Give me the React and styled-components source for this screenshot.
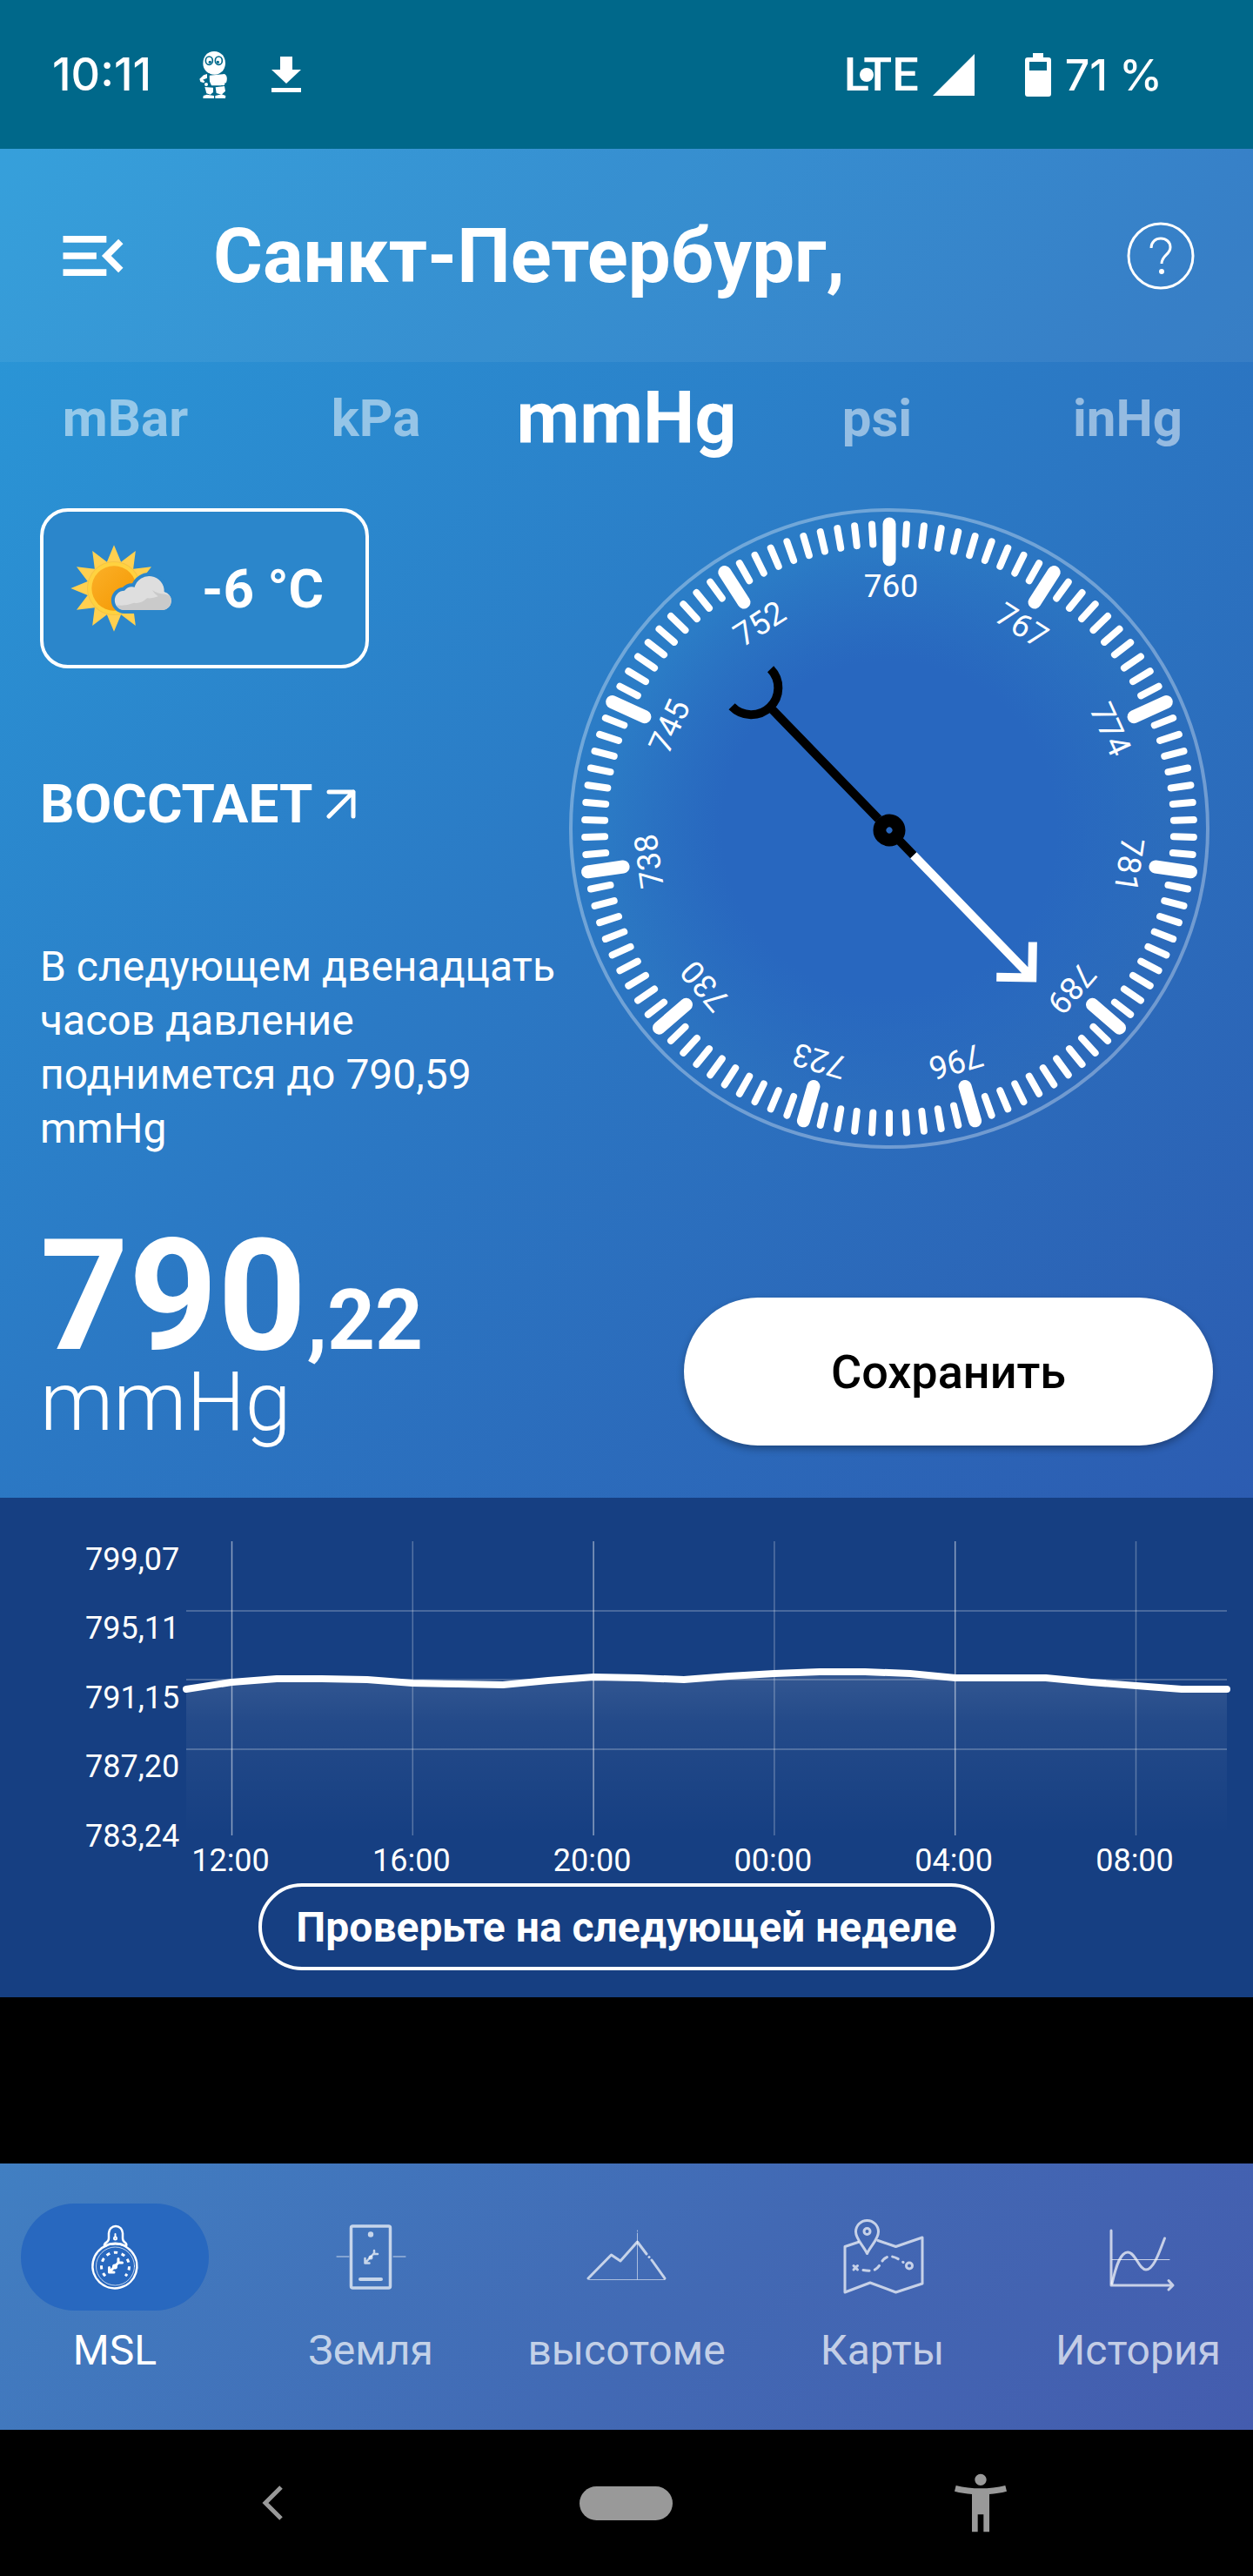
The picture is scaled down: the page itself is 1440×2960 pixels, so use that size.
import styled, {createGlobalStyle} from "styled-components";
import {useState} from "react";
import {MdMenuOpen, MdAccessibilityNew} from "react-icons/md";

const GlobalStyle = createGlobalStyle`
    * {
        box-sizing: border-box;
    }

    body {
        margin: 0;
        background: #000;
        color: #fff;
        font-family: Roboto, "Liberation Sans", sans-serif;
    }

    button {
        padding: 0;
        border: 0;
        background: none;
        color: inherit;
        font-family: inherit;
        cursor: pointer;
    }

    svg {
        display: block;
        flex-shrink: 0;
    }
`

const StatusBar = styled.div`
    display: flex;
    align-items: center;
    justify-content: space-between;
    height: 171px;
    padding: 0 104px 0 60px;
    background: #00688a;
    font-family: Inter, Roboto, sans-serif;
    font-size: 52px;
    font-weight: 500;
`

const StatusGroup = styled.div`
    display: flex;
    align-items: center;
`

const Notifications = styled.div`
    display: flex;
    align-items: center;
    gap: 26px;
    margin-left: 32px;
`

const Network = styled.span`
    position: relative;
    margin-right: 16px;
    font-family: Roboto, sans-serif;
    font-size: 54px;

    &::after {
        content: "";
        position: absolute;
        top: 50%;
        left: 18px;
        width: 16px;
        height: 16px;
        margin-top: -8px;
        border-radius: 50%;
        background: #fff;
    }
`

const Battery = styled.span`
    display: flex;
    align-items: center;
    gap: 16px;
    margin-left: 58px;
    font-size: 50px;
`

const Hero = styled.div`
    background: linear-gradient(135deg, #2a9ad9, #2b7ac5 48%, #2c5cb1);
`

const Header = styled.header`
    display: flex;
    align-items: center;
    height: 245px;
    padding: 0 66px 0 61px;
    background: rgba(255, 255, 255, 0.06);
`

const IconButton = styled.button`
    display: flex;
`

const City = styled.h1`
    flex: 1;
    margin: 0 0 0 92px;
    font-size: 87px;
    font-weight: 700;
    line-height: 100px;
`

const Units = styled.div`
    display: grid;
    grid-template-columns: repeat(5, 1fr);
    height: 128px;
`

const Unit = styled.button`
    color: ${({$active}) => $active ? "#fff" : "rgba(255, 255, 255, 0.5)"};
    font-size: ${({$active}) => $active ? "84px" : "60px"};
    font-weight: 700;
`

const Instruments = styled.section`
    display: grid;
    grid-template-columns: minmax(0, 1fr) 736px;
    padding: 40px 50px 89px 46px;
`

const Summary = styled.div`
    display: flex;
    flex-direction: column;
    align-items: flex-start;
    gap: 120px;
`

const Weather = styled.button`
    display: flex;
    align-items: center;
    gap: 28px;
    height: 184px;
    padding: 0 48px 0 24px;
    border: 4px solid #fff;
    border-radius: 32px;
    background: #2b86cb;
    font-size: 62px;
    font-weight: 700;
`

const Trend = styled.h2`
    display: flex;
    align-items: center;
    gap: 16px;
    margin: 0;
    font-size: 62px;
    font-weight: 700;
    line-height: 72px;
`

const Forecast = styled.p`
    max-width: 600px;
    margin: 0;
    font-size: 48px;
    line-height: 62px;
`

const ReadingRow = styled.section`
    display: flex;
    align-items: flex-end;
    justify-content: space-between;
    padding: 0 46px 60px;
`

const Reading = styled.div`
    display: flex;
    align-items: baseline;
    font-size: 96px;
    font-weight: 700;
    line-height: 80px;
`

const Whole = styled.span`
    font-size: 178px;
    line-height: 144px;
`

const ReadingUnit = styled.div`
    font-size: 95px;
    font-weight: 300;
    line-height: 100px;
`

const SaveButton = styled.button`
    width: 608px;
    height: 170px;
    border-radius: 85px;
    background: #fff;
    box-shadow: 0 4px 8px rgba(0, 0, 0, 0.3);
    color: #000;
    font-size: 54px;
    font-weight: 500;
`

const ChartPanel = styled.section`
    display: flex;
    flex-direction: column;
    align-items: center;
    padding: 40px 0 31px;
    background: #163f82;
`

const ChartSvg = styled.svg`
    width: 100%;
    height: auto;
`

const CheckButton = styled.button`
    height: 100px;
    padding: 0 39px;
    border: 4px solid #fff;
    border-radius: 50px;
    font-size: 48px;
    font-weight: 700;
`

const AdSpace = styled.div`
    height: 191px;
`

const TabBar = styled.nav`
    display: grid;
    grid-template-columns: repeat(5, minmax(0, 1fr));
    column-gap: 78px;
    height: 306px;
    padding: 46px 24px 0;
    background: linear-gradient(135deg, #417fc2, #4269b4 55%, #445cae);
`

const Tab = styled.a`
    display: flex;
    flex-direction: column;
    align-items: center;
    gap: 18px;
    color: ${({$active}) => $active ? "#fff" : "rgba(255, 255, 255, 0.7)"};
    font-size: 48px;
    line-height: 56px;
    text-decoration: none;
    white-space: nowrap;
`

const TabIcon = styled.span`
    display: flex;
    align-items: center;
    justify-content: center;
    width: 100%;
    height: 123px;
    border-radius: 62px;
    background: ${({$active}) => $active ? "#2868bf" : "transparent"};
`

const SystemBar = styled.div`
    display: grid;
    grid-template-columns: repeat(3, 1fr);
    align-items: center;
    justify-items: center;
    height: 168px;
    padding: 0 110px;
    color: #999;
`

const HomePill = styled.button`
    width: 107px;
    height: 39px;
    border-radius: 20px;
    background: #999;
`

const Mascot = () => (
    <svg width="80" height="80" viewBox="0 0 240 240" fill="#fff">
        <path d="M120 39c23 0 39 17 39 41 0 21-16 39-37 39-24 0-40-17-40-38 0-25 16-42 38-42z"/>
        <g fill="#fff" stroke="#00688a" strokeWidth="5">
            <ellipse cx="103" cy="71" rx="12" ry="14"/>
            <ellipse cx="136" cy="71" rx="12" ry="14"/>
        </g>
        <circle cx="106" cy="76" r="5" fill="#00688a"/>
        <circle cx="133" cy="76" r="5" fill="#00688a"/>
        <path d="M104 122l52-5c10 6 10 18 6 30l-12 4-5 6h-34l-6-14z"/>
        <path d="M96 117L84 121l-14 13 3 10 12 4 3-6-7-5 15-6z"/>
        <path d="M104 115l-10 36" fill="none" stroke="#00688a" strokeWidth="3"/>
        <circle cx="93" cy="153" r="6"/>
        <circle cx="151" cy="151" r="6"/>
        <path d="M88 162l29 2v16l-10 8-13-4zM125 163l31-4 3 17-13 12-18-5z"/>
        <path d="M83 192l12-4 25 4v9H82zM124 192l22-5 14 5-1 9h-35z"/>
    </svg>
)

const Download = () => (
    <svg width="34" height="41" viewBox="0 0 34 41" fill="#fff">
        <path d="M10 0h14v15h10L17 31 0 15h10zM0 36h34v5H0z"/>
    </svg>
)

const Signal = () => (
    <svg width="48" height="48" viewBox="0 0 48 48" fill="#fff">
        <path d="M48 0v48H0z"/>
    </svg>
)

const BatteryIcon = () => (
    <svg width="30" height="50" viewBox="0 0 30 50" fill="#fff">
        <path d="M9 0h12v5h6q3 0 3 3v39q0 3-3 3H3q-3 0-3-3V8q0-3 3-3h6zM5 10v10h20V10z" fillRule="evenodd"/>
    </svg>
)

const HelpIcon = () => (
    <svg width="80" height="80" viewBox="0 0 80 80" fill="none" stroke="#fff" strokeWidth="3">
        <circle cx="40" cy="40" r="37"/>
        <path d="M29 31c0-7 5-11 11-11s11 4 11 10c0 9-10 9-10 19"/>
        <circle cx="41" cy="58" r="3" fill="#fff" stroke="none"/>
    </svg>
)

// twelve-pointed star: alternate outer tips and inner notches
const rays = Array.from({length: 24}, (_, i) => {
    const a = i * Math.PI / 12
    const r = i % 2 ? 94 : 149
    return `${171 + r * Math.sin(a)},${180 - r * Math.cos(a)}`
}).join(" ")

const cloud = "M207 255A33 33 0 0 1 207 188Q221 171 242 176A52 52 0 0 1 344 192A32 32 0 0 1 340 255Z"

const SunIcon = () => (
    <svg width="130" height="120" viewBox="0 0 390 360">
        <defs>
            <linearGradient id="sun" x1="0" y1="0" x2="1" y2="1">
                <stop offset="0" stopColor="#fbb028"/>
                <stop offset="1" stopColor="#f49700"/>
            </linearGradient>
            <clipPath id="cloud">
                <path d={cloud}/>
            </clipPath>
        </defs>
        <polygon points={rays} fill="#ffd050"/>
        <circle cx="171" cy="180" r="93" fill="#f5c344"/>
        <circle cx="171" cy="180" r="90" fill="#ffd23f"/>
        <circle cx="171" cy="180" r="77" fill="url(#sun)"/>
        <path d={cloud} fill="#2b86cb" stroke="#2b86cb" strokeWidth="24"/>
        <path d={cloud} fill="#dedede"/>
        <g clipPath="url(#cloud)">
            <path d="M170 236q35 8 70-6 25 4 45-16 20 2 38-6-12-8-20-22 20 14 42 14 28 4 30 25v40H170z" fill="#cacaca"/>
        </g>
    </svg>
)

const RiseArrow = () => (
    <svg width="34" height="34" viewBox="0 0 34 34" fill="none" stroke="#fff" strokeWidth="5" strokeLinecap="round" strokeLinejoin="round">
        <path d="M3 3h28v28M31 3L3 31"/>
    </svg>
)

const labels = [760, 767, 774, 781, 789, 796, 723, 730, 738, 745, 752]

const Dial = () => (
    <svg width="736" height="736" viewBox="-368 -368 736 736">
        <defs>
            <radialGradient id="face">
                <stop offset="0" stopColor="#2867bf"/>
                <stop offset="0.6" stopColor="#2867bf"/>
                <stop offset="1" stopColor="#2867bf" stopOpacity="0"/>
            </radialGradient>
        </defs>
        <circle r="320" fill="url(#face)"/>
        <circle r="366" fill="none" stroke="#fff" strokeOpacity="0.33" strokeWidth="4"/>
        {Array.from({length: 110}, (_, i) => (
            <line
                key={i}
                y1="-350"
                y2={i % 10 ? -327 : -309}
                stroke="#fff"
                strokeWidth={i % 10 ? 8 : 15}
                strokeLinecap="round"
                transform={`rotate(${i * 360 / 110})`}
            />
        ))}
        {labels.map((label, i) => (
            <text
                key={label}
                x="2"
                y="-266"
                fill="#fff"
                fontSize="37"
                textAnchor="middle"
                transform={`rotate(${i * 360 / 11})`}
            >
                {label}
            </text>
        ))}
        <g transform="translate(0 2) rotate(135.9)" fill="none" strokeWidth="10">
            <path d="M0 18V195M-31 228A31 31 0 0 1 31 228" stroke="#000"/>
            <path d="M0-15V-40" stroke="#000"/>
            <path d="M0-40V-236M-29-207L0-236L29-207" stroke="#fff"/>
            <circle r="11" stroke="#000" strokeWidth="15"/>
        </g>
    </svg>
)

const chartLeft = 214
const chartWidth = 1196
const pressures = [170, 162, 158, 158, 159, 163, 164, 165, 160, 156, 157, 159, 155, 152, 150, 150, 152, 157, 157, 157, 162, 166, 170, 170]
const line = pressures.map((y, i) => `${chartLeft + i * chartWidth / 23} ${y + 10}`).join("L")
const hours = ["12:00", "16:00", "20:00", "00:00", "04:00", "08:00"]
const levels = ["799,07", "795,11", "791,15", "787,20", "783,24"]

const Chart = () => (
    <ChartSvg viewBox="0 0 1440 403" fontSize="36" fill="#fff">
        <defs>
            <linearGradient id="area" gradientUnits="userSpaceOnUse" x1="0" y1="160" x2="0" y2="348">
                <stop offset="0" stopColor="#fff" stopOpacity="0.13"/>
                <stop offset="0.3" stopColor="#fff" stopOpacity="0.06"/>
                <stop offset="1" stopColor="#fff" stopOpacity="0"/>
            </linearGradient>
        </defs>
        <path d={`M${line}V348H${chartLeft}Z`} fill="url(#area)"/>
        {[90, 169, 249].map(y => (
            <path key={y} d={`M${chartLeft} ${y}H1410`} stroke="#fff" strokeOpacity="0.22" strokeWidth="2"/>
        ))}
        {hours.map((hour, i) => (
            <g key={hour}>
                <path d={`M${266.5 + i * 207.8} 10V348`} stroke="#fff" strokeOpacity={i % 2 ? 0.28 : 0.5} strokeWidth="1.5"/>
                <text x={265 + i * 207.8} y="389" textAnchor="middle">{hour}</text>
            </g>
        ))}
        {levels.map((level, i) => (
            <text key={level} x="98" y={43 + i * 79.4}>{level}</text>
        ))}
        <path d={`M${line}`} fill="none" stroke="#fff" strokeWidth="8" strokeLinecap="round" strokeLinejoin="round"/>
    </ChartSvg>
)

const Glyph = ({children}) => (
    <svg width="100" height="100" viewBox="0 0 100 100" fill="none" stroke="currentColor" strokeWidth="3" strokeLinecap="round" strokeLinejoin="round">
        {children}
    </svg>
)

const MslIcon = () => (
    <Glyph>
        <path d="M41 36a25.500 25.500 0 1 0 5-1.300" strokeWidth="2.500"/>
        <path d="M38 37c-1-5 5-3 5-9v-6a7.800 7.800 0 0 1 16 0v6c0 6 6 4 4 9-8-4-17-4-25 0z" strokeWidth="2.500"/>
        <circle cx="50.500" cy="60" r="22" strokeWidth="0.700"/>
        <path d="M39 71.300a16 16 0 1 1 23 0" strokeWidth="3" strokeDasharray="4.200 4.700" strokeLinecap="butt"/>
        <path d="M50.500 23v3" strokeWidth="2"/>
        <circle cx="50.500" cy="28" r="1.500" strokeWidth="2"/>
        <path d="M43.500 67L54 56M43.500 61.500v5.500h5.500M54 51.500v4.500h4.500"/>
        <circle cx="50" cy="60.500" r="1.500"/>
    </Glyph>
)

const PhoneIcon = () => (
    <Glyph>
        <rect x="27.500" y="14" width="45" height="71" rx="2" strokeWidth="3.500"/>
        <circle cx="50" cy="23.500" r="3.200" fill="currentColor" stroke="none"/>
        <path d="M38 75h24" strokeWidth="4"/>
        <path d="M11 49h14M76 49h14" strokeWidth="1"/>
        <path d="M43.500 56.500L54 45M43.500 51v5.500h5M54 42v4h4" strokeWidth="2.500"/>
        <circle cx="50" cy="50" r="1.500" strokeWidth="2"/>
    </Glyph>
)

const MountainIcon = () => (
    <Glyph>
        <path d="M6 74L32.500 47L43 54L62.500 32L73 46M79 53L94 74"/>
        <path d="M76 49.500v0.100"/>
        <path d="M7 75.500H94M62.500 19v1M62.500 22V75" strokeWidth="0.800"/>
    </Glyph>
)

const MapIcon = () => (
    <Glyph>
        <path d="M22 32.500L7 37.500V90L36 79L65.500 90L96 80V27L65.500 37.500L45 30.500"/>
        <path d="M32.500 45.500C28 36 19.500 29 19.500 20.500a13 13 0 0 1 26 0C45.500 29 37 36 32.500 45.500z"/>
        <circle cx="32.500" cy="20" r="3.500"/>
        <path d="M17 59.500l4.500 4.500M21.500 59.500L17 64"/>
        <path d="M28 64.500C45 68 46 59 50 54C56 46 64 48 74 55.500" strokeDasharray="7 6.500"/>
        <circle cx="81" cy="59.500" r="3.500"/>
    </Glyph>
)

const HistoryIcon = () => (
    <Glyph>
        <path d="M19 19V82H90M85 76.500L90 82L85 87"/>
        <path d="M20 80C25 58 30 44 38 44C47 44 51 64 59 64C68 64 75 42 80.500 28"/>
        <path d="M20 52.500H86" strokeWidth="1"/>
    </Glyph>
)

const tabs = [
    {id: "msl", title: "MSL", Icon: MslIcon},
    {id: "ground", title: "Земля", Icon: PhoneIcon},
    {id: "altimeter", title: "высотоме", Icon: MountainIcon},
    {id: "maps", title: "Карты", Icon: MapIcon},
    {id: "history", title: "История", Icon: HistoryIcon}
]

const App = () => {
    const [unit, setUnit] = useState("mmHg")
    const [tab, setTab] = useState("msl")

    return (
        <>
            <GlobalStyle/>
            <StatusBar>
                <StatusGroup>
                    <span>10:11</span>
                    <Notifications>
                        <Mascot/>
                        <Download/>
                    </Notifications>
                </StatusGroup>
                <StatusGroup>
                    <Network>LTE</Network>
                    <Signal/>
                    <Battery><BatteryIcon/>71 %</Battery>
                </StatusGroup>
            </StatusBar>

            <Hero>
                <Header>
                    <IconButton aria-label="Меню"><MdMenuOpen size={92}/></IconButton>
                    <City>Санкт-Петербург,</City>
                    <IconButton aria-label="Справка"><HelpIcon/></IconButton>
                </Header>

                <Units>
                    {["mBar", "kPa", "mmHg", "psi", "inHg"].map(name => (
                        <Unit key={name} $active={name === unit} onClick={() => setUnit(name)}>{name}</Unit>
                    ))}
                </Units>

                <Instruments>
                    <Summary>
                        <Weather><SunIcon/>-6 °C</Weather>
                        <Trend>ВОССТАЕТ <RiseArrow/></Trend>
                        <Forecast>В следующем двенадцать часов давление поднимется до 790,59 mmHg</Forecast>
                    </Summary>
                    <Dial/>
                </Instruments>

                <ReadingRow>
                    <div>
                        <Reading><Whole>790</Whole>,22</Reading>
                        <ReadingUnit>mmHg</ReadingUnit>
                    </div>
                    <SaveButton>Сохранить</SaveButton>
                </ReadingRow>
            </Hero>

            <ChartPanel>
                <Chart/>
                <CheckButton>Проверьте на следующей неделе</CheckButton>
            </ChartPanel>

            <AdSpace/>

            <TabBar>
                {tabs.map(({id, title, Icon}) => (
                    <Tab key={id} href={`#${id}`} $active={id === tab} onClick={() => setTab(id)}>
                        <TabIcon $active={id === tab}><Icon/></TabIcon>
                        {title}
                    </Tab>
                ))}
            </TabBar>

            <SystemBar>
                <IconButton aria-label="Назад">
                    <svg width="24" height="40" viewBox="0 0 24 40" fill="none" stroke="currentColor" strokeWidth="5">
                        <path d="M22 2L4 20L22 38"/>
                    </svg>
                </IconButton>
                <HomePill aria-label="Домой"/>
                <IconButton aria-label="Специальные возможности"><MdAccessibilityNew size={80}/></IconButton>
            </SystemBar>
        </>
    )
}

export default App
